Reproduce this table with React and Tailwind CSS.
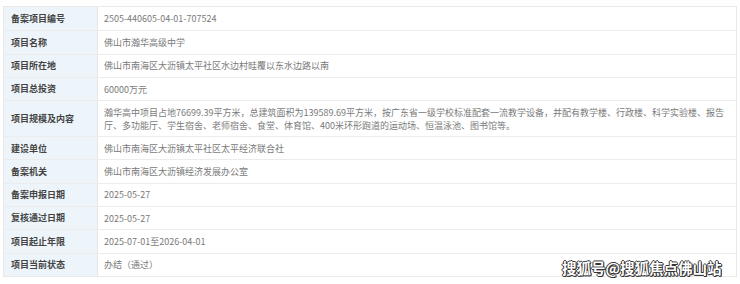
import React from "react";

const rows = [
  ["备案项目编号", "2505-440605-04-01-707524"],
  ["项目名称", "佛山市瀚华高级中学"],
  ["项目所在地", "佛山市南海区大沥镇太平社区水边村畦覆以东水边路以南"],
  ["项目总投资", "60000万元"],
  [
    "项目规模及内容",
    "瀚华高中项目占地76699.39平方米，总建筑面积为139589.69平方米，按广东省一级学校标准配套一流教学设备，并配有教学楼、行政楼、科学实验楼、报告厅、多功能厅、学生宿舍、老师宿舍、食堂、体育馆、400米环形跑道的运动场、恒温泳池、图书馆等。",
    true,
  ],
  ["建设单位", "佛山市南海区大沥镇太平社区太平经济联合社"],
  ["备案机关", "佛山市南海区大沥镇经济发展办公室"],
  ["备案申报日期", "2025-05-27"],
  ["复核通过日期", "2025-05-27"],
  ["项目起止年限", "2025-07-01至2026-04-01"],
  ["项目当前状态", "办结（通过）"],
];

export default function App() {
  return (
    <div
      className="w-[740px] h-[284px] bg-white relative overflow-hidden"
      style={{ fontFamily: '"Noto Sans CJK SC", "Noto Sans", sans-serif' }}
    >
      <div className="pt-[6px] pl-[3px] pr-[3px]">
        <div className="border border-[#e9e9e9] flex flex-col">
          {rows.map(([label, value, tall], i) => (
            <div
              key={i}
              className={`flex ${i > 0 ? "border-t border-[#ececec]" : ""} ${
                tall ? "h-[36px]" : "h-[23.3px]"
              }`}
            >
              <div className="w-[94px] shrink-0 bg-[#eef5fa] border-r border-[#e6e6e6] flex items-center pl-[7px] text-[9px] font-bold text-[#444]">
                {label}
              </div>
              <div className="flex-1 flex items-center pl-[6px] pr-[10px] text-[9px] leading-[13px] text-[#7a7a7a]">
                {value}
              </div>
            </div>
          ))}
        </div>
      </div>
      <div
        className="absolute left-[562px] top-[257px] text-[14.5px] font-bold text-white"
        style={{
          textShadow:
            "1px 0 0 #333, -1px 0 0 #333, 0 1px 0 #333, 0 -1px 0 #333, 1px 1px 0 #333",
        }}
      >
        搜狐号@搜狐焦点佛山站
      </div>
    </div>
  );
}
